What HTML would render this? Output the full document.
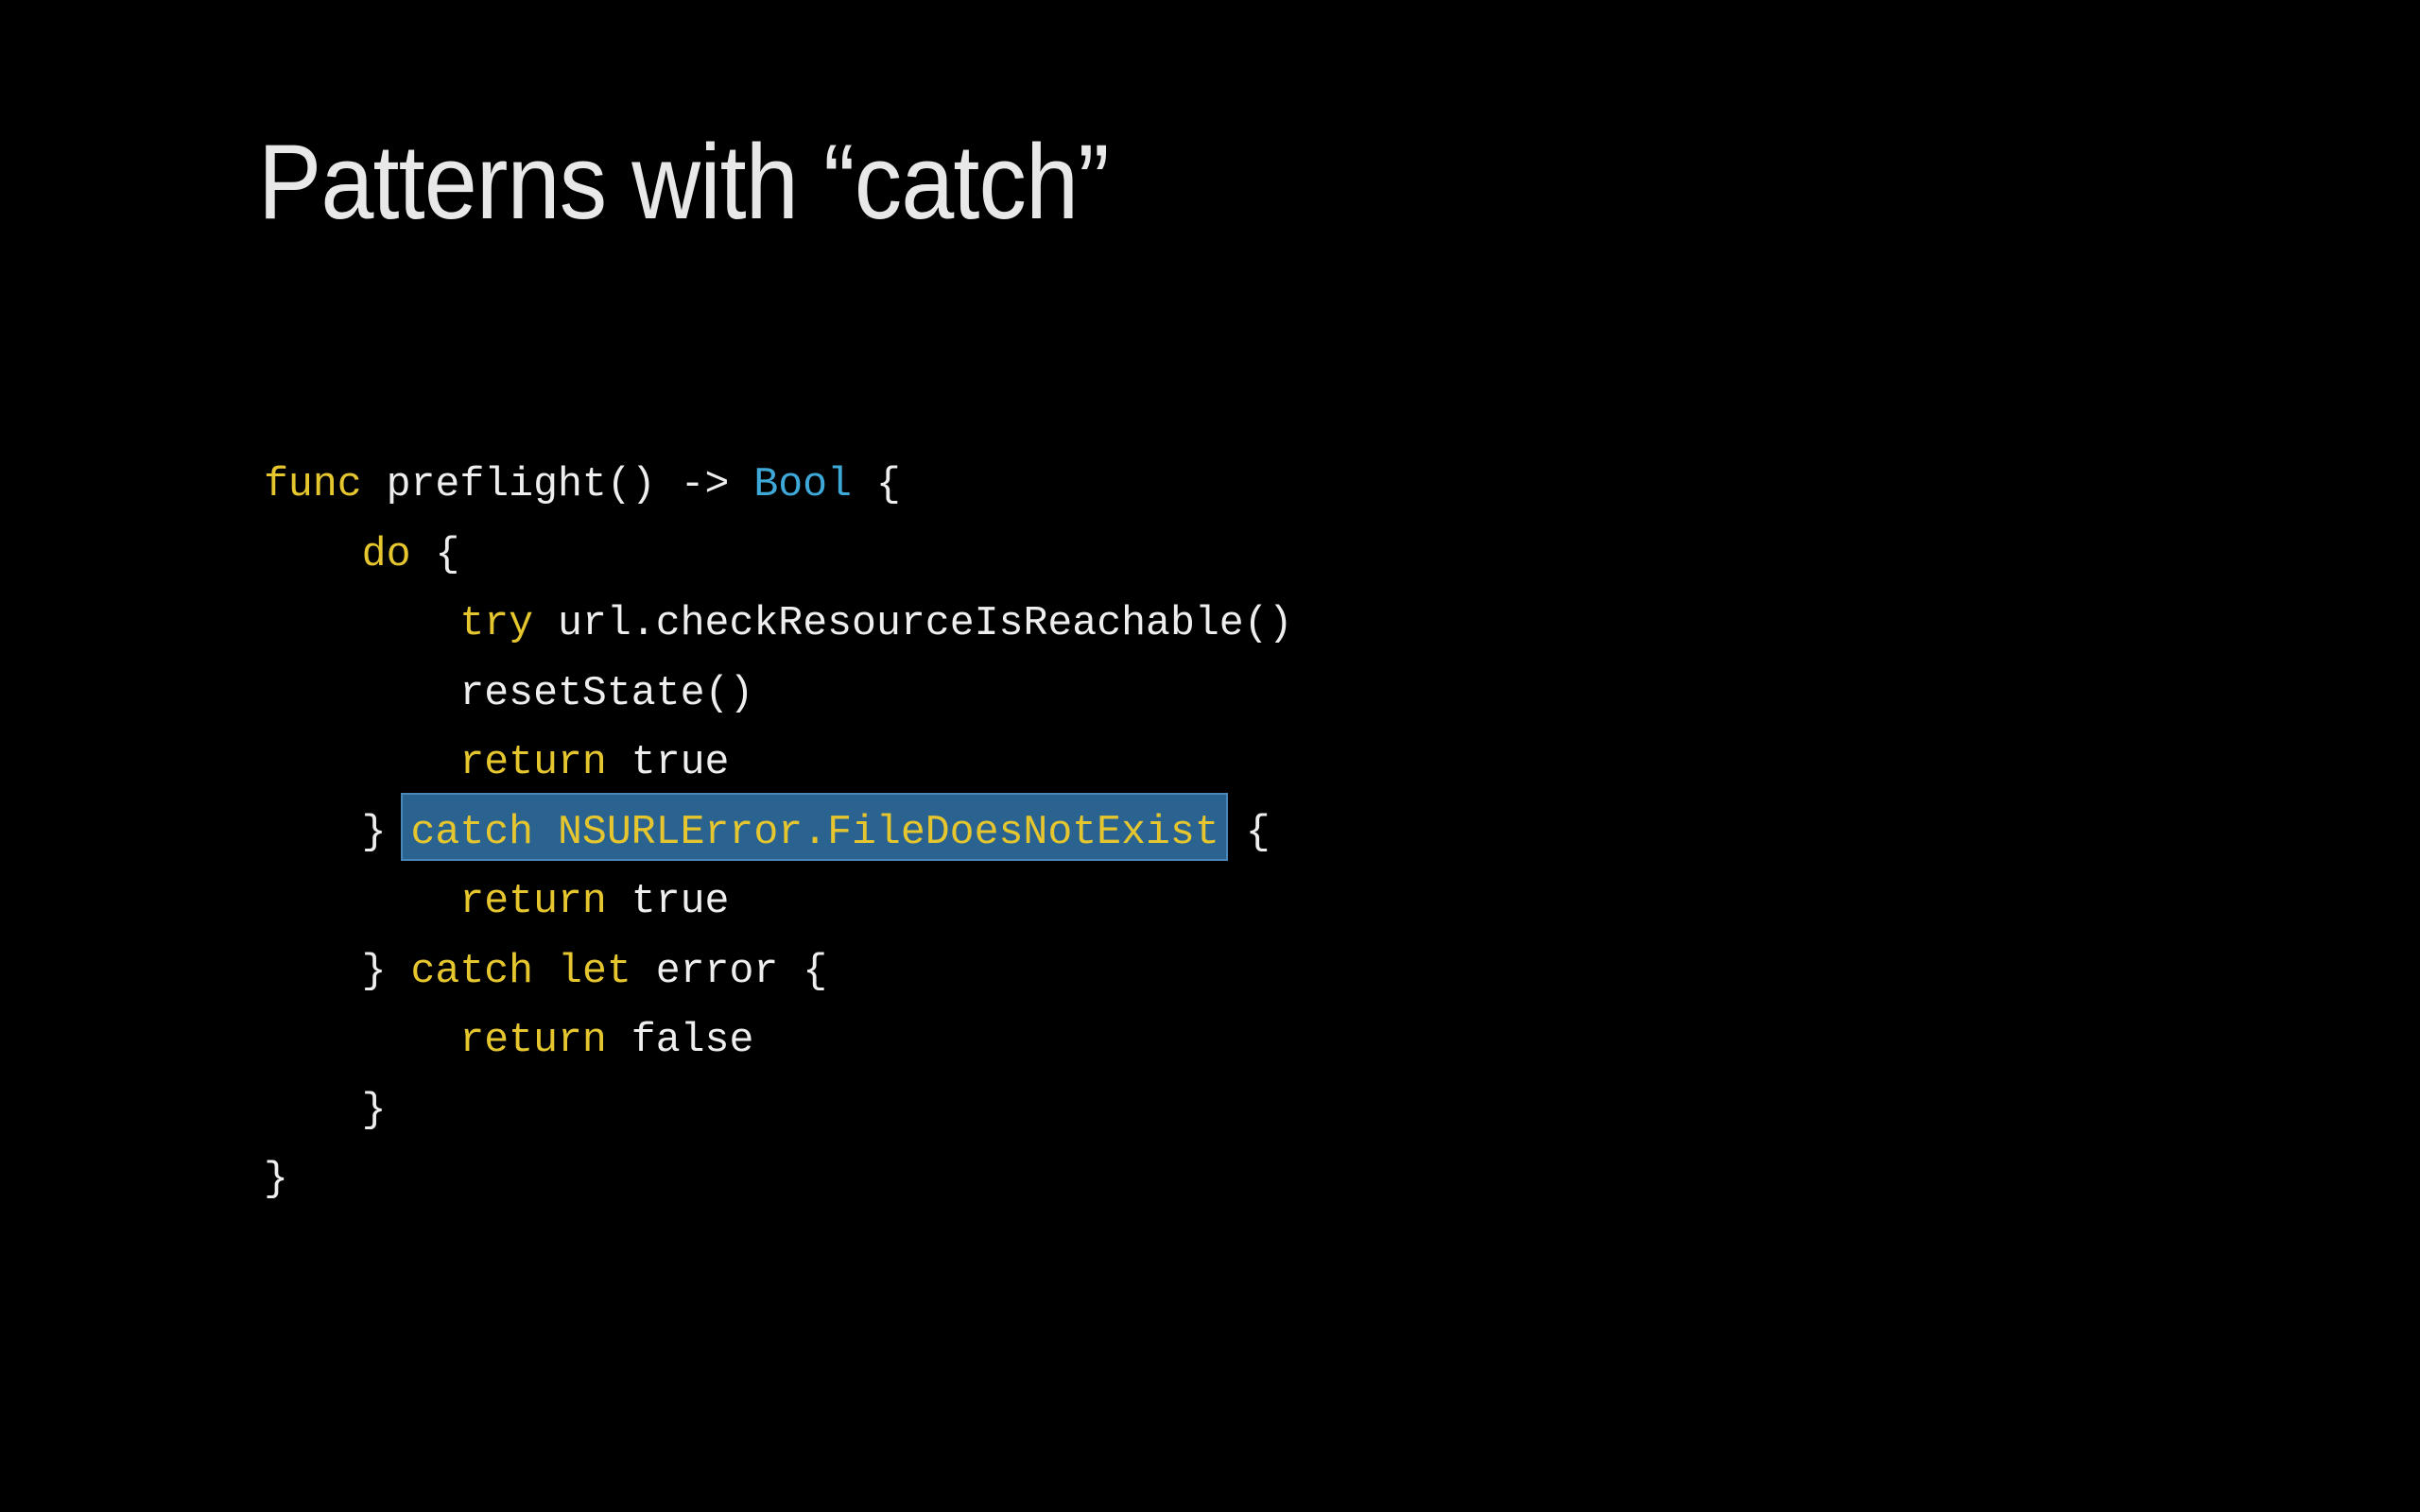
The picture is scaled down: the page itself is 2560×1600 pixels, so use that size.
<!DOCTYPE html>
<html><head><meta charset="utf-8"><style>
html,body{margin:0;padding:0;background:#000;width:2560px;height:1600px;overflow:hidden}
.title{position:absolute;left:273px;top:137px;font-family:"Liberation Sans",sans-serif;font-size:112px;line-height:112px;color:#e8e8e8;letter-spacing:-1px;white-space:nowrap;transform:scaleX(0.9);transform-origin:0 0}
.code{position:absolute;left:279px;top:476px;font-family:"Liberation Mono",monospace;font-size:43.2px;line-height:73.5px;color:#eeeeee;margin:0;white-space:pre}
.k{color:#e6c62e}.t{color:#3ea9d9}
.hl{position:absolute;left:424px;top:839px;width:871px;height:68px;background:#2a6290;border:2px solid #4a86b8;box-sizing:content-box}
.hlt{position:relative;color:#e6c62e;margin-right:2px}
</style></head><body>
<div class="title">Patterns with “catch”</div>
<div class="hl"></div>
<pre class="code"><span class="k">func</span> preflight() -&gt; <span class="t">Bool</span> {
    <span class="k">do</span> {
        <span class="k">try</span> url.checkResourceIsReachable()
        resetState()
        <span class="k">return</span> true
    } <span class="hlt">catch NSURLError.FileDoesNotExist</span> {
        <span class="k">return</span> true
    } <span class="k">catch</span> <span class="k">let</span> error {
        <span class="k">return</span> false
    }
}</pre>
</body></html>
